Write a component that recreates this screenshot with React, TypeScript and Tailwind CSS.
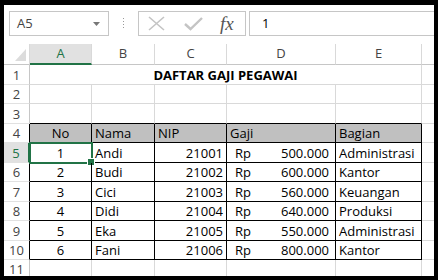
import React from "react";

const FONT = { fontFamily: "'Open Sans', 'Noto Sans', sans-serif" };

type Col = { key: string; w: string };
const COLS: Col[] = [
  { key: "A", w: "w-[62px]" },
  { key: "B", w: "w-[63px]" },
  { key: "C", w: "w-[72px]" },
  { key: "D", w: "w-[109px]" },
  { key: "E", w: "w-[86px]" },
];

const DATA = [
  ["1", "Andi", "21001", "500.000", "Administrasi"],
  ["2", "Budi", "21002", "600.000", "Kantor"],
  ["3", "Cici", "21003", "560.000", "Keuangan"],
  ["4", "Didi", "21004", "640.000", "Produksi"],
  ["5", "Eka", "21005", "550.000", "Administrasi"],
  ["6", "Fani", "21006", "800.000", "Kantor"],
];

function rowH(n: number) {
  return n % 2 === 1 ? "h-[20px]" : "h-[19px]";
}

function RowHeader({ n }: { n: number }) {
  const sel = n === 5;
  const inTable = n >= 4 && n <= 10;
  return (
    <div
      className={
        "w-[26px] shrink-0 box-border flex items-center justify-center text-[13px] leading-[14px] border-b border-b-[#e1e1e1] " +
        (sel
          ? "bg-[#e1e1e1] text-[#217346] border-r-2 border-r-[#217346]"
          : inTable
          ? "bg-white text-[#444] border-r border-r-black"
          : "bg-white text-[#444] border-r border-r-[#c6c6c6]")
      }
    >
      {n}
    </div>
  );
}

function FillerCell() {
  return <div className="flex-1 box-border border-b border-b-[#d9d9d9]" />;
}

function EmptyRow({ n, blackBottom }: { n: number; blackBottom?: boolean }) {
  return (
    <div className={"flex " + rowH(n)}>
      <RowHeader n={n} />
      {COLS.map((c) => (
        <div
          key={c.key}
          className={
            c.w +
            " shrink-0 box-border border-r border-r-[#d9d9d9] border-b " +
            (blackBottom ? "border-b-black" : "border-b-[#d9d9d9]")
          }
        />
      ))}
      <FillerCell />
    </div>
  );
}

function LastRow() {
  return (
    <div className="flex h-[16px]">
      <div className="w-[26px] shrink-0 box-border flex items-center justify-center pt-[3px] text-[13px] leading-[13px] bg-white text-[#444] border-r border-r-[#c6c6c6]">
        11
      </div>
      {COLS.map((c) => (
        <div key={c.key} className={c.w + " shrink-0 box-border border-r border-r-[#d9d9d9]"} />
      ))}
      <div className="flex-1" />
    </div>
  );
}

function TitleRow() {
  return (
    <div className="flex h-[20px]">
      <RowHeader n={1} />
      <div className="w-[392px] shrink-0 box-border border-r border-r-[#d9d9d9] border-b border-b-[#d9d9d9] flex items-end justify-center text-[13px] font-bold text-black leading-[18px]">
        DAFTAR GAJI PEGAWAI
      </div>
      <FillerCell />
    </div>
  );
}

const cellBase =
  "shrink-0 box-border border-r border-b border-black flex items-end text-[13px] leading-[18px] text-black";

function HeaderRow() {
  return (
    <div className="flex h-[19px]">
      <RowHeader n={4} />
      <div className={"w-[62px] bg-[#c0c0c0] justify-center " + cellBase}>No</div>
      <div className={"w-[63px] bg-[#c0c0c0] pl-[3px] " + cellBase}>Nama</div>
      <div className={"w-[72px] bg-[#c0c0c0] pl-[3px] " + cellBase}>NIP</div>
      <div className={"w-[109px] bg-[#c0c0c0] pl-[3px] " + cellBase}>Gaji</div>
      <div className={"w-[86px] bg-[#c0c0c0] pl-[3px] " + cellBase}>Bagian</div>
      <FillerCell />
    </div>
  );
}

function DataRow({ n, d }: { n: number; d: string[] }) {
  const sel = n === 5;
  return (
    <div className={"flex " + rowH(n)}>
      <RowHeader n={n} />
      <div className={"w-[62px] justify-center relative " + cellBase}>
        {d[0]}
        {sel && (
          <>
            <div className="absolute -left-[1px] -top-[1px] w-[64px] h-[22px] box-border border-2 border-[#217346]" />
            <div className="absolute -right-[4px] -bottom-[4px] w-[6px] h-[6px] bg-[#217346] border border-white box-content" />
          </>
        )}
      </div>
      <div className={"w-[63px] pl-[3px] " + cellBase}>{d[1]}</div>
      <div className={"w-[72px] justify-end pr-[3px] " + cellBase}>{d[2]}</div>
      <div className={"w-[109px] justify-between pl-[8px] pr-[6px] " + cellBase}>
        <span>Rp</span>
        <span>{d[3]}</span>
      </div>
      <div className={"w-[86px] pl-[3px] " + cellBase}>{d[4]}</div>
      <FillerCell />
    </div>
  );
}

function ColumnHeaderRow() {
  return (
    <div className="flex h-[21px]">
      <div className="w-[26px] shrink-0 box-border border-r border-r-[#d9d9d9] border-b border-b-[#c6c6c6] relative">
        <svg className="absolute right-[3px] bottom-[3px]" width="11" height="12" viewBox="0 0 11 12">
          <polygon points="11,0 11,12 0,12" fill="#dcdcdc" />
        </svg>
      </div>
      {COLS.map((c) => {
        const sel = c.key === "A";
        return (
          <div
            key={c.key}
            className={
              c.w +
              " shrink-0 box-border flex items-center justify-center text-[13px] border-r border-r-[#d9d9d9] " +
              (sel
                ? "bg-[#e1e1e1] text-[#217346] border-b-2 border-b-[#217346]"
                : "bg-white text-[#444] border-b border-b-[#c6c6c6]")
            }
          >
            {c.key}
          </div>
        );
      })}
      <div className="flex-1 box-border border-b border-b-[#c6c6c6]" />
    </div>
  );
}

function FormulaBar() {
  return (
    <div className="h-[39px] flex items-start pt-[6px] pl-[5px] text-[13px] text-[#444]">
      <div className="w-[100px] h-[25px] box-border border border-[#c6c6c6] flex items-center justify-between pl-[7px] pr-[8px]">
        <span>A5</span>
        <svg width="7" height="4" viewBox="0 0 7 4">
          <polygon points="0,0 7,0 3.5,4" fill="#777" />
        </svg>
      </div>
      <div className="w-[29px] h-[25px] flex items-center justify-center">
        <svg width="3" height="11" viewBox="0 0 3 11">
          <rect x="1" y="0" width="1" height="1" fill="#999" />
          <rect x="1" y="3" width="1" height="1" fill="#999" />
          <rect x="1" y="6" width="1" height="1" fill="#999" />
          <rect x="1" y="9" width="1" height="1" fill="#999" />
        </svg>
      </div>
      <div className="w-[108px] h-[25px] box-border border border-[#c6c6c6] flex items-center">
        <svg className="ml-[9px]" width="17" height="15" viewBox="0 0 17 15">
          <path d="M1 1 L16 14 M16 1 L1 14" stroke="#c4c4c4" strokeWidth="1.6" fill="none" />
        </svg>
        <svg className="ml-[19px]" width="19" height="15" viewBox="0 0 19 15">
          <path d="M1 8 L6.5 13 L18 2" stroke="#c4c4c4" strokeWidth="2.4" fill="none" />
        </svg>
        <span
          className="ml-[17px] text-[19px] italic text-[#555] leading-none"
          style={{ fontFamily: "'Liberation Serif', 'DejaVu Serif', serif" }}
        >
          fx
        </span>
      </div>
      <div className="flex-1 ml-[3px] h-[25px] box-border border border-r-0 border-[#c6c6c6] flex items-center pl-[12px] text-black">
        1
      </div>
    </div>
  );
}

export default function App() {
  return (
    <div className="w-[438px] h-[280px] bg-black pl-[4px] pr-[4px] pt-[5px] pb-[4px] box-border" style={FONT}>
      <div className="w-full h-full bg-white overflow-hidden">
        <FormulaBar />
        <ColumnHeaderRow />
        <TitleRow />
        <EmptyRow n={2} />
        <EmptyRow n={3} blackBottom />
        <HeaderRow />
        {DATA.map((d, i) => (
          <DataRow key={i} n={5 + i} d={d} />
        ))}
        <LastRow />
      </div>
    </div>
  );
}
